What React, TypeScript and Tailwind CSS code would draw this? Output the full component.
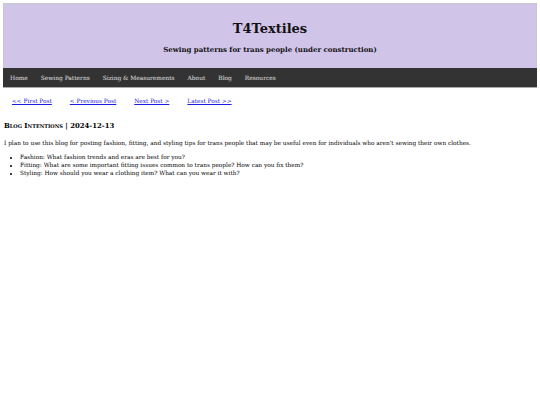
import React from "react";

export default function App() {
  const nav = ["Home", "Sewing Patterns", "Sizing & Measurements", "About", "Blog", "Resources"];
  const links = ["<< First Post", "< Previous Post", "Next Post >", "Latest Post >>"];
  return (
    <div className="min-h-[405px] bg-white text-black" style={{ fontFamily: '"DejaVu Serif", Georgia, serif' }}>
      <div className="px-[3px] pt-[3px]">
        <header className="h-[65px] bg-[#d1c4e9] border border-b-0 border-[#c8c8c8] flex flex-col items-center">
          <h1 className="mt-[15px] text-[13px] leading-[20px] font-bold text-[#111]">T4Textiles</h1>
          <p className="mt-[6px] text-[7px] leading-[10px] font-bold text-[#111]">Sewing patterns for trans people (under construction)</p>
        </header>
        <nav className="h-[20px] bg-[#333333] border-b border-[#aaa] flex items-center pt-[2px] px-[0.5px]">
          {nav.map((n) => (
            <a key={n} className="px-[6.5px] text-[5.9px] text-[#e0e0e0]">{n}</a>
          ))}
        </nav>
      </div>
      <div className="flex gap-[18px] pl-[12px] mt-[8px] text-[5.8px] leading-[10px]">
        {links.map((l) => (
          <a key={l} className="text-[#1a1ae0] underline">{l}</a>
        ))}
      </div>
      <div className="px-[4px]">
        <h2 className="mt-[15px] text-[6.9px] leading-[10px] font-bold" style={{ fontVariant: "small-caps" }}>
          Blog Intentions | 2024-12-13
        </h2>
        <p className="mt-[8px] text-[5.8px] leading-[8px]">
          I plan to use this blog for posting fashion, fitting, and styling tips for trans people that may be useful even for individuals who aren't sewing their own clothes.
        </p>
        <ul className="mt-[6px] pl-[16px] list-disc text-[5.8px] leading-[8px]">
          <li>Fashion: What fashion trends and eras are best for you?</li>
          <li>Fitting: What are some important fitting issues common to trans people? How can you fix them?</li>
          <li>Styling: How should you wear a clothing item? What can you wear it with?</li>
        </ul>
      </div>
    </div>
  );
}
